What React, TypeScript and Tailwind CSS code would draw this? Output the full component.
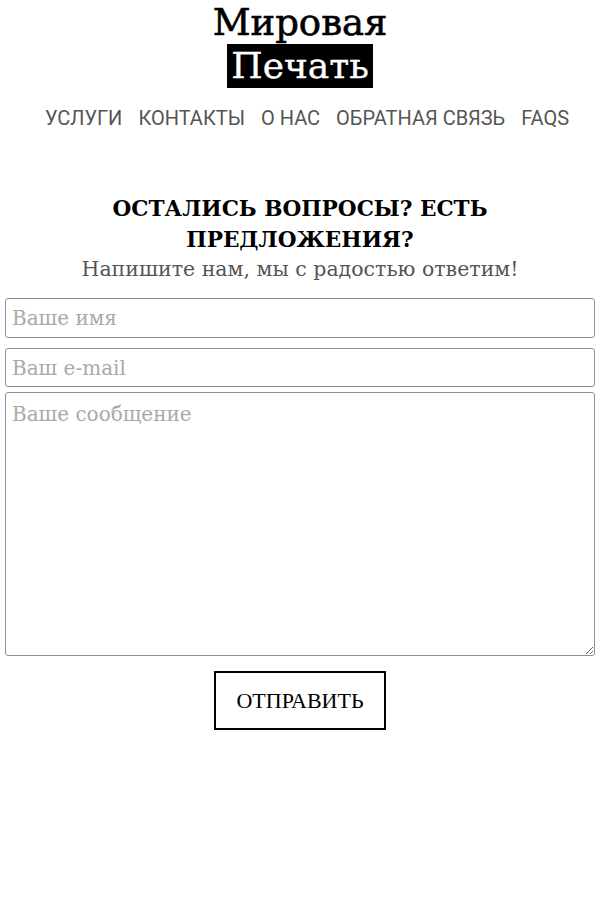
export default function App() {
  const serif = "font-['DejaVu_Serif','Liberation_Serif',serif]";

  return (
    <div className="flex min-h-[900px] flex-col items-center bg-white">
      <header className="flex flex-col items-center pt-[2px]">
        <h1 className={`${serif} text-[37px] leading-[42px] text-black [-webkit-text-stroke:0.6px_black]`}>Мировая</h1>
        <div className={`${serif} bg-black px-[4px] text-[36px] leading-[44px] text-white [-webkit-text-stroke:0.4px_white]`}>Печать</div>
      </header>

      <nav className="mt-[16px] ml-[14px] flex gap-[16px] font-['Roboto',sans-serif] text-[20px] leading-[28px] text-[#555]">
        <a>УСЛУГИ</a>
        <a>КОНТАКТЫ</a>
        <a>О НАС</a>
        <a>ОБРАТНАЯ СВЯЗЬ</a>
        <a>FAQS</a>
      </nav>

      <section className="mt-[61px] flex w-full flex-col items-center px-[5px]">
        <h2 className={`${serif} w-[400px] text-center text-[21.6px] font-bold leading-[31px] text-black`}>
          ОСТАЛИСЬ ВОПРОСЫ? ЕСТЬ ПРЕДЛОЖЕНИЯ?
        </h2>
        <p className={`${serif} text-[20.5px] leading-[28px] text-[#555]`}>
          Напишите нам, мы с радостью ответим!
        </p>

        <form className="mt-[15px] flex w-full flex-col">
          <input
            className={`${serif} h-[40px] w-full rounded-[3px] border border-[#8f8f9d] px-[6px] text-[20px] placeholder:text-[#a9a9a9] focus:outline-none`}
            placeholder="Ваше имя"
            type="text"
          />
          <input
            className={`${serif} mt-[10px] h-[39px] w-full rounded-[3px] border border-[#8f8f9d] px-[6px] text-[20px] placeholder:text-[#a9a9a9] focus:outline-none`}
            placeholder="Ваш e-mail"
            type="email"
          />
          <textarea
            className={`${serif} mt-[5px] h-[264px] w-full rounded-[3px] border border-[#8f8f9d] px-[6px] py-[6px] text-[20px] placeholder:text-[#a9a9a9] focus:outline-none`}
            placeholder="Ваше сообщение"
          />
          <button
            className="mx-auto mt-[15px] h-[59px] w-[172px] border-2 border-black bg-white font-['Liberation_Serif',serif] text-[22px] text-black"
            type="button"
          >
            ОТПРАВИТЬ
          </button>
        </form>
      </section>
    </div>
  );
}
